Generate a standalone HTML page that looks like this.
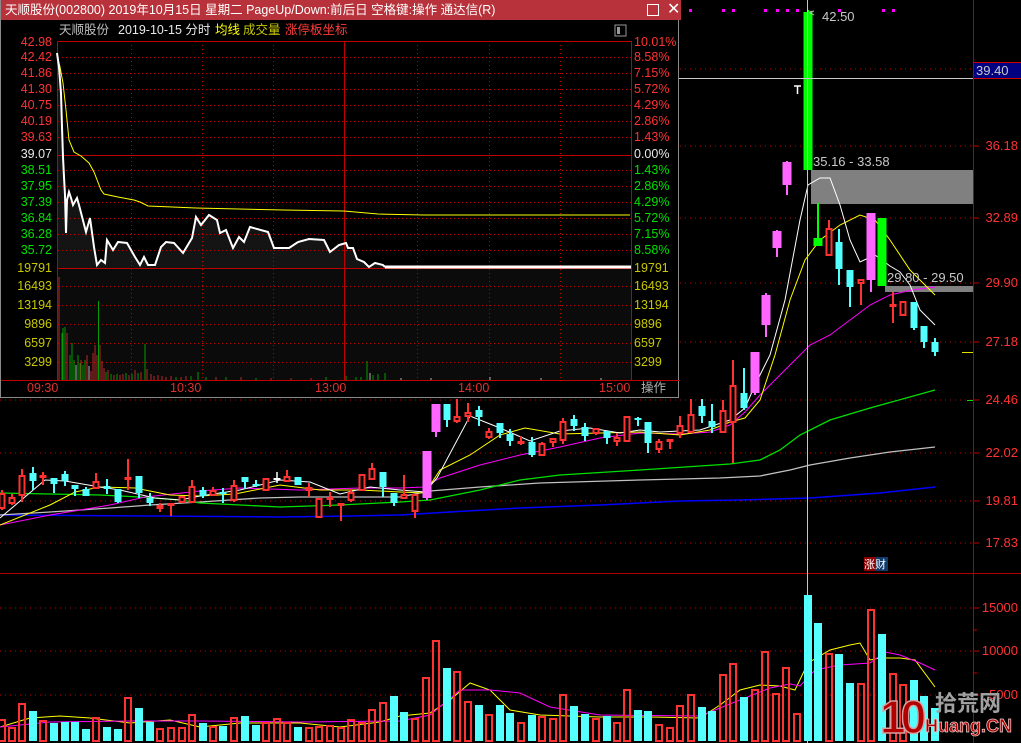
<!DOCTYPE html>
<html><head><meta charset="utf-8">
<style>
html,body{margin:0;padding:0;background:#000;width:1021px;height:743px;overflow:hidden;font-family:"Liberation Sans","Noto Sans CJK SC",sans-serif;}
#main{position:absolute;left:0;top:0}
.ax{position:absolute;color:#ff3232;font-size:13px;right:3px;line-height:14px}
#pop{position:absolute;left:0;top:0;width:679px;height:398px;background:#000;border:1px solid #8a8a8a;border-top:none;box-sizing:border-box}
#tb{position:absolute;left:0;top:0;width:680px;height:20px;background:#b7323a;color:#fff;font-size:12.5px;line-height:20px;white-space:nowrap}
.pl{position:absolute;font-size:12.5px;line-height:13px;white-space:nowrap}
</style></head><body>
<svg id="main" width="1021" height="743" xmlns="http://www.w3.org/2000/svg">
<g stroke="#c00000" stroke-dasharray="1,4" stroke-width="1">
<line x1="0" y1="69" x2="973" y2="69"/><line x1="0" y1="146" x2="973" y2="146"/><line x1="0" y1="218" x2="973" y2="218"/><line x1="0" y1="283" x2="973" y2="283"/><line x1="0" y1="342" x2="973" y2="342"/><line x1="0" y1="400" x2="973" y2="400"/><line x1="0" y1="453" x2="973" y2="453"/><line x1="0" y1="501" x2="973" y2="501"/><line x1="0" y1="543" x2="973" y2="543"/>
<line x1="0" y1="608" x2="973" y2="608"/><line x1="0" y1="651" x2="973" y2="651"/><line x1="0" y1="695" x2="973" y2="695"/>
</g>
<line x1="973.5" y1="0" x2="973.5" y2="743" stroke="#b00000"/>
<line x1="0" y1="573.5" x2="1021" y2="573.5" stroke="#b00000"/>
<g stroke="#c00000"><line x1="974" y1="146" x2="979" y2="146"/><line x1="974" y1="218" x2="979" y2="218"/><line x1="974" y1="283" x2="979" y2="283"/><line x1="974" y1="342" x2="979" y2="342"/><line x1="974" y1="400" x2="979" y2="400"/><line x1="974" y1="453" x2="979" y2="453"/><line x1="974" y1="501" x2="979" y2="501"/><line x1="974" y1="543" x2="979" y2="543"/><line x1="974" y1="608" x2="979" y2="608"/><line x1="974" y1="630" x2="977" y2="630"/><line x1="974" y1="651" x2="979" y2="651"/><line x1="974" y1="673" x2="977" y2="673"/><line x1="974" y1="695" x2="979" y2="695"/></g>
<rect x="811" y="170" width="162" height="34" fill="#808080"/>
<rect x="885" y="286" width="88" height="6" fill="#808080"/>
<g fill="none" stroke-width="1">
<polyline stroke="#0000ff" stroke-width="1.5" points="0,515 150,516 280,517 350,516 400,515 450,512 520,508 600,505 680,501 740,500 810,498 880,493 935,487"/>
<polyline stroke="#c0c0c0" stroke-width="1.3" points="0,515 50,512 110,508 150,505 200,502 260,498 300,497 340,497 400,497 430,491 480,487 540,483 640,480 720,478 760,476 790,470 810,465 850,458 890,452 935,447"/>
<polyline stroke="#00e000" stroke-width="1.3" points="0,493 100,495 140,497 180,500 200,503 280,507 340,505 400,502 430,500 480,490 520,480 560,475 640,470 700,466 730,464 760,460 780,450 800,435 830,420 870,408 935,390"/>
<polyline stroke="#ff00ff" points="0,525 50,515 110,505 145,497 200,491 240,488 300,490 360,488 400,488 425,487 440,478 480,465 520,455 560,447 600,438 640,433 680,434 710,432 730,425 745,412 760,395 775,380 790,365 810,345 830,335 850,320 870,305 890,295 912,290 935,287"/>
<polyline stroke="#ffff00" points="0,525 50,505 75,492 100,487 135,488 170,495 200,496 235,494 280,485 320,490 360,490 400,492 425,493 440,470 470,455 500,435 525,428 560,434 600,433 640,432 680,435 710,430 730,422 745,418 760,400 775,355 790,300 805,260 820,240 840,225 860,215 875,220 890,240 910,270 935,295"/>
<polyline stroke="#ffffff" points="0,518 45,480 65,481 100,487 120,490 155,498 180,500 200,496 240,490 280,480 310,482 340,494 370,487 400,490 425,492 437,478 470,416 500,428 530,441 560,431 590,428 620,433 640,430 660,432 700,430 730,420 745,408 755,385 770,355 785,300 800,220 808,185 820,178 830,178 840,205 850,240 860,262 875,255 890,266 900,272 910,285 920,310 935,325"/>
<polyline stroke="#ffff00" points="0,727 30,718 60,716 90,718 130,723 170,720 200,727 240,723 300,723 340,727 380,722 400,716 430,713 450,700 470,683 490,690 510,710 540,715 600,717 650,717 700,718 720,705 740,690 760,685 780,686 795,690 808,663 830,650 850,645 860,643 870,660 880,658 900,658 915,660 935,687"/>
<polyline stroke="#ff00ff" points="0,727 50,722 130,721 200,721 300,722 400,721 430,715 460,690 490,690 520,693 550,707 600,715 700,716 740,700 770,688 790,684 800,686 815,670 840,665 870,663 885,652 900,655 920,663 935,670"/>
</g>
<g id="cg"></g>
<g fill="#ff00ff"><rect x="689" y="9" width="3" height="3"/><rect x="722" y="9" width="3" height="3"/><rect x="732" y="9" width="3" height="3"/><rect x="764" y="9" width="3" height="3"/><rect x="776" y="9" width="3" height="3"/><rect x="786" y="9" width="3" height="3"/><rect x="796" y="9" width="3" height="3"/><rect x="838" y="9" width="3" height="3"/><rect x="882" y="9" width="3" height="3"/><rect x="892" y="9" width="3" height="3"/></g>
<line x1="807.5" y1="0" x2="807.5" y2="743" stroke="#c8c8c8"/>
<line x1="0" y1="78.5" x2="973" y2="78.5" stroke="#c8c8c8"/>
<path d="M794 86h7M797.5 86v8" stroke="#fff" stroke-width="1.5"/>
<line x1="962" y1="352.5" x2="973" y2="352.5" stroke="#e0e000"/>
<line x1="967" y1="400.5" x2="973" y2="400.5" stroke="#00e000"/>
<rect x="974" y="62" width="47" height="16" fill="#000080"/>
<line x1="974" y1="62.5" x2="1021" y2="62.5" stroke="#d00000"/>
<line x1="974" y1="78.5" x2="1021" y2="78.5" stroke="#d00000"/>
<text x="976" y="75" fill="#c8c8c8" font-size="13" font-family="Liberation Sans">39.40</text>
<path d="M809 12l5 3M809 12l5-1" stroke="#c0c0c0"/>
<g font-family="Liberation Sans" font-size="13" fill="#c8c8c8">
<text x="822" y="21">42.50</text>
<text x="813" y="166">35.16 - 33.58</text>
<text x="887" y="282">29.80 - 29.50</text>
</g>
<rect x="864" y="557" width="12" height="14" fill="#8b0000"/><rect x="876" y="557" width="12" height="14" fill="#103a6a"/>
<text x="864" y="568" fill="#fff" font-size="11" font-family="Noto Sans CJK SC">涨财</text>
</svg>
<div class="ax" style="top:139px">36.18</div>
<div class="ax" style="top:211px">32.89</div>
<div class="ax" style="top:276px">29.90</div>
<div class="ax" style="top:335px">27.18</div>
<div class="ax" style="top:393px">24.46</div>
<div class="ax" style="top:446px">22.02</div>
<div class="ax" style="top:494px">19.81</div>
<div class="ax" style="top:536px">17.83</div>
<div class="ax" style="top:601px">15000</div>
<div class="ax" style="top:644px">10000</div>
<div class="ax" style="top:688px">5000</div>
<div style="position:absolute;left:880px;top:694px;font:bold 46px/46px 'Liberation Sans',sans-serif;color:#b00000;-webkit-text-stroke:1.5px #d8a0a0;letter-spacing:-5px">10</div>
<div style="position:absolute;left:935px;top:689px;font:bold 22px/26px 'Noto Sans CJK SC',sans-serif;color:#a0a0a0">拾荒网</div>
<div style="position:absolute;left:925px;top:715px;font:bold 18px/22px 'Liberation Sans',sans-serif;color:#b00000;-webkit-text-stroke:0.7px #f0d0d0">Huang.CN</div>

<div id="pop">
<div id="tb"><span style="position:absolute;left:4px">天顺股份(002800) 2019年10月15日 星期二 PageUp/Down:前后日 空格键:操作 通达信(R)</span>
<span style="position:absolute;left:646px;top:4px;width:10px;height:10px;border:1px solid #fff"></span>
<span style="position:absolute;left:666px;top:0;font-size:16px">✕</span></div>
<svg width="680" height="398" style="position:absolute;left:0;top:0" xmlns="http://www.w3.org/2000/svg">
<rect x="57" y="268" width="573" height="112" fill="#0b0b0b"/>
<path id="fill" fill="#141414" d=""/>
<g stroke="#c00000" stroke-dasharray="1,3">
<line x1="57" y1="57.5" x2="630" y2="57.5"/><line x1="57" y1="73.5" x2="630" y2="73.5"/><line x1="57" y1="89.5" x2="630" y2="89.5"/><line x1="57" y1="105.5" x2="630" y2="105.5"/><line x1="57" y1="121.5" x2="630" y2="121.5"/><line x1="57" y1="137.5" x2="630" y2="137.5"/>
<line x1="57" y1="170.5" x2="630" y2="170.5"/><line x1="57" y1="186.5" x2="630" y2="186.5"/><line x1="57" y1="202.5" x2="630" y2="202.5"/><line x1="57" y1="218.5" x2="630" y2="218.5"/><line x1="57" y1="234.5" x2="630" y2="234.5"/><line x1="57" y1="250.5" x2="630" y2="250.5"/>
<line x1="57" y1="286.5" x2="630" y2="286.5"/><line x1="57" y1="305.5" x2="630" y2="305.5"/><line x1="57" y1="324.5" x2="630" y2="324.5"/><line x1="57" y1="343.5" x2="630" y2="343.5"/><line x1="57" y1="362.5" x2="630" y2="362.5"/>
<line x1="130.5" y1="41" x2="130.5" y2="380"/><line x1="201.5" y1="41" x2="201.5" y2="380"/><line x1="272.5" y1="41" x2="272.5" y2="380"/><line x1="416.5" y1="41" x2="416.5" y2="380"/><line x1="488.5" y1="41" x2="488.5" y2="380"/><line x1="559.5" y1="41" x2="559.5" y2="380"/>
</g>
<g stroke="#c00000" fill="none">
<line x1="56" y1="41.5" x2="631" y2="41.5"/><line x1="56.5" y1="41" x2="56.5" y2="380"/><line x1="630.5" y1="41" x2="630.5" y2="380"/><line x1="343.5" y1="41" x2="343.5" y2="380"/>
<line x1="57" y1="155.5" x2="630" y2="155.5"/><line x1="57" y1="268.5" x2="630" y2="268.5"/><line x1="0" y1="380.5" x2="679" y2="380.5"/>
</g>
<g id="pv"></g>
<polyline fill="none" stroke="#ffff00" points="56,55 59,67 62,83 65,110 68,140 73,152 80,156 88,163 93,172 100,190 103,194 117,197 133,200 139,202 147,206 195,208 282,210 343,211 377,214 423,215 629,215"/>
<polyline id="wl" fill="none" stroke="#ffffff" stroke-width="2" points="56,53 58,67 60,93 61,127 62,157 63,177 64,195 65,233 66,200 68,192 70,198 72,205 76,198 78,205 85,232 89,218 93,247 96,265 100,260 104,263 106,240 112,250 117,242 126,243 134,257 139,265 143,257 147,265 154,265 160,247 165,242 173,243 182,253 191,238 195,217 200,225 208,215 216,220 219,233 225,230 232,248 238,237 243,242 249,227 267,232 273,248 288,248 297,242 308,239 323,240 329,252 338,245 345,243 347,248 352,248 356,259 363,262 368,267 374,263 382,265 384,267"/>
<line x1="384" y1="267" x2="630" y2="267" stroke="#fff" stroke-width="3"/>
<rect x="614" y="25" width="11" height="11" fill="none" stroke="#999"/><rect x="616" y="27" width="3" height="7" fill="#999"/>
</svg>
<div class="pl" style="left:58px;top:24px;color:#c0c0c0">天顺股份</div>
<div class="pl" style="left:117px;top:24px;color:#e8e8e8">2019-10-15 分时</div>
<div class="pl" style="left:214px;top:24px;color:#ffff00">均线</div>
<div class="pl" style="left:242px;top:24px;color:#c8c800">成交量</div>
<div class="pl" style="left:284px;top:24px;color:#ff3c3c">涨停板坐标</div>
<div id="pla"></div>
</div>
<script>
var NS='http://www.w3.org/2000/svg';
function el(p,t,a){var e=document.createElementNS(NS,t);for(var k in a)e.setAttribute(k,a[k]);p.appendChild(e);return e;}
var C=[[2,493,508,490,510,'r'],[12,497,503,494,505,'r'],[22,475,495,469,502,'r'],[33,473,481,467,490,'c'],[43,475,477,472,485,'r'],[54,478,484,478,493,'c'],[65,474,481,471,486,'c'],[75,485,489,485,496,'c'],[86,489,496,487,496,'c'],[96,481,488,473,488,'r'],[107,486,489,479,494,'c'],[118,489,502,489,503,'c'],[128,477,478,459,490,'r'],[139,476,493,476,498,'c'],[150,498,503,493,506,'c'],[160,505,508,503,512,'r'],[171,503,505,503,516,'r'],[182,496,502,496,502,'r'],[192,486,502,480,502,'r'],[203,490,496,487,498,'c'],[213,490,495,487,495,'r'],[223,492,493,488,503,'c'],[234,485,500,480,502,'r'],[245,477,482,477,489,'c'],[256,484,485,480,487,'c'],[266,478,490,478,490,'r'],[277,478,480,472,483,'w'],[287,476,481,470,481,'r'],[298,477,485,477,485,'c'],[309,487,490,483,497,'r'],[319,498,517,498,517,'r'],[330,497,498,492,507,'r'],[341,503,504,503,521,'r'],[351,492,500,489,502,'r'],[362,474,490,474,490,'r'],[372,468,479,463,479,'r'],[383,472,487,472,497,'c'],[394,493,503,493,506,'c'],[404,494,498,475,499,'r'],[415,494,511,494,518,'r'],[427,451,498,451,500,'p'],[436,404,432,404,437,'p'],[447,404,420,404,427,'c'],[457,416,421,399,423,'r'],[468,412,416,403,422,'r'],[479,410,417,406,426,'c'],[489,431,437,428,439,'r'],[500,423,433,423,438,'c'],[510,434,441,429,446,'c'],[521,441,442,436,445,'r'],[532,442,455,437,457,'c'],[542,443,455,442,455,'r'],[553,438,442,438,447,'r'],[563,421,440,418,444,'r'],[574,419,426,415,431,'c'],[585,427,436,423,441,'c'],[596,428,433,428,435,'r'],[607,431,438,431,444,'c'],[617,437,441,433,446,'r'],[627,416,441,416,441,'r'],[638,418,419,417,426,'c'],[648,422,443,422,453,'c'],[659,441,449,439,453,'r'],[670,439,440,439,449,'r'],[680,425,433,416,438,'r'],[691,414,432,399,433,'r'],[702,406,416,399,423,'c'],[712,421,427,404,433,'c'],[723,410,432,400,432,'r'],[733,385,422,360,463,'r'],[744,393,408,368,410,'c'],[755,352,393,352,395,'p'],[766,295,325,293,337,'p'],[777,231,248,230,257,'p'],[787,162,185,161,195,'p'],[808,12,170,10,170,'g'],[818,238,246,203,246,'g'],[829,228,255,220,255,'r'],[839,242,269,229,285,'c'],[850,270,287,270,307,'c'],[861,279,283,279,305,'r'],[871,213,280,213,292,'p'],[882,218,286,218,286,'g'],[893,304,306,292,323,'r'],[903,301,315,301,315,'r'],[914,302,328,302,330,'c'],[924,326,342,326,348,'c'],[935,342,352,338,356,'c']];
var V=[[2,719,'r'],[12,727,'r'],[22,703,'r'],[33,711,'c'],[43,720,'r'],[54,723,'c'],[65,722,'c'],[75,722,'c'],[86,729,'c'],[96,717,'r'],[107,727,'c'],[118,729,'c'],[128,697,'r'],[139,708,'c'],[150,722,'c'],[160,728,'r'],[171,727,'r'],[182,727,'r'],[192,714,'r'],[203,723,'c'],[213,726,'r'],[223,726,'c'],[234,717,'r'],[245,716,'c'],[256,725,'c'],[266,722,'r'],[277,718,'r'],[287,722,'r'],[298,727,'c'],[309,727,'r'],[319,726,'r'],[330,725,'r'],[341,727,'r'],[351,719,'r'],[362,722,'r'],[372,709,'r'],[383,702,'r'],[394,696,'c'],[404,712,'c'],[415,718,'r'],[426,677,'r'],[436,640,'r'],[447,668,'c'],[457,671,'r'],[468,701,'r'],[479,705,'c'],[489,714,'r'],[500,705,'c'],[510,713,'c'],[521,722,'r'],[532,715,'c'],[542,716,'r'],[553,718,'r'],[563,694,'r'],[574,706,'c'],[585,714,'c'],[596,718,'r'],[607,716,'c'],[617,722,'r'],[627,689,'r'],[638,710,'c'],[648,711,'c'],[659,724,'r'],[670,727,'r'],[680,705,'r'],[691,694,'r'],[702,707,'c'],[712,711,'c'],[723,674,'r'],[733,663,'r'],[744,697,'c'],[755,689,'r'],[765,651,'r'],[776,693,'r'],[786,667,'r'],[797,713,'r'],[808,595,'c'],[818,623,'c'],[829,653,'r'],[839,654,'c'],[850,683,'c'],[861,683,'r'],[871,609,'r'],[882,634,'c'],[893,673,'r'],[903,684,'r'],[914,680,'c'],[924,696,'c'],[935,708,'c']];
var g=document.getElementById('cg');
var col={r:'#ff3232',c:'#54ffff',p:'#ff66ff',g:'#00ff00',w:'#ffffff'};
V.forEach(function(v){var x=v[0];if(v[2]=='r')el(g,'rect',{x:x-3,y:v[1]+1,width:6,height:740-v[1],fill:'none',stroke:'#ff3232','stroke-width':2});else el(g,'rect',{x:x-4,y:v[1],width:8,height:741-v[1],fill:'#54ffff'});});
C.forEach(function(c){var x=c[0],t=c[5],w=(t=='p'||t=='g')?9:7;var cl=col[t];
el(g,'line',{x1:x,y1:c[3],x2:x,y2:c[4],stroke:cl,'stroke-width':(t=='w'?1.5:2)});
if(t=='r')el(g,'rect',{x:x-w/2+1,y:c[1]+1,width:w-2,height:Math.max(c[2]-c[1]-1,1),fill:'#000',stroke:cl,'stroke-width':2});
else el(g,'rect',{x:x-w/2,y:c[1],width:w,height:Math.max(c[2]-c[1],2),fill:cl});});
var pv=document.getElementById('pv');
var PV=[[58,277,'r'],[61,333,'g'],[62,328,'g'],[64,327,'g'],[66,333,'r'],[69,355,'g'],[71,343,'g'],[73,360,'g'],[75,365,'w'],[77,355,'g'],[79,363,'g'],[80,360,'r'],[82,365,'g'],[84,360,'g'],[86,355,'r'],[88,366,'w'],[90,371,'r'],[92,353,'r'],[94,345,'r'],[96,355,'r'],[97.5,301,'g'],[99,345,'r'],[101,361,'r'],[103,368,'r'],[105,372,'g'],[107,370,'r'],[110,374,'g'],[113,375,'r'],[116,374,'g'],[119,375,'r'],[122,374,'r'],[125,373,'g'],[128,375,'r'],[131,374,'g'],[134,370,'r'],[137,373,'g'],[140,372,'r'],[144,344,'g'],[146,369,'r'],[150,374,'r'],[153,376,'r'],[157,375,'r'],[161,376,'r'],[165,377,'r'],[170,376,'r'],[175,377,'g'],[180,377,'r'],[185,376,'r'],[190,376,'g'],[197,372,'g'],[205,377,'g'],[215,377,'r'],[225,377,'g'],[240,377,'r'],[255,378,'g'],[270,378,'r'],[290,378,'r'],[310,378,'r'],[325,377,'g'],[345,376,'g'],[355,377,'g'],[360,377,'g'],[366,361,'g'],[369,373,'w'],[372,375,'g'],[377,374,'g'],[384,373,'g'],[400,378,'w'],[430,378,'w'],[489,377,'w'],[540,378,'w'],[600,378,'w']];
PV.forEach(function(v){el(pv,'line',{x1:v[0],y1:v[1],x2:v[0],y2:380,stroke:v[2]=='r'?'#e03030':v[2]=='g'?'#00c000':'#ddd','stroke-width':0.8});});
var pts=document.getElementById('wl').getAttribute('points');
document.getElementById('fill').setAttribute('d','M'+pts.split(' ').join(' L')+' L630,267 L630,268 L56,268 Z');
var L=[['42.98',42,'#ff3232'],['42.42',57,'#ff3232'],['41.86',73,'#ff3232'],['41.30',89,'#ff3232'],['40.75',105,'#ff3232'],['40.19',121,'#ff3232'],['39.63',137,'#ff3232'],['39.07',154,'#e8e8e8'],['38.51',170,'#00e000'],['37.95',186,'#00e000'],['37.39',202,'#00e000'],['36.84',218,'#00e000'],['36.28',234,'#00e000'],['35.72',250,'#00e000'],['19791',268,'#c8c800'],['16493',286,'#c8c800'],['13194',305,'#c8c800'],['9896',324,'#c8c800'],['6597',343,'#c8c800'],['3299',362,'#c8c800']];
var R=['10.01%','8.58%','7.15%','5.72%','4.29%','2.86%','1.43%','0.00%','1.43%','2.86%','4.29%','5.72%','7.15%','8.58%'];
var pla=document.getElementById('pla'),h='';
L.forEach(function(l,i){h+='<div class="pl" style="right:626px;top:'+(l[1]-6)+'px;color:'+l[2]+'">'+l[0]+'</div>';
var rt=i<14?R[i]:l[0];var rc=i<7?'#ff3232':i==7?'#e8e8e8':i<14?'#00e000':'#c8c800';
h+='<div class="pl" style="left:633px;top:'+(l[1]-6)+'px;color:'+rc+'">'+rt+'</div>';});
[['09:30',26],['10:30',169],['13:00',314],['14:00',457],['15:00',598]].forEach(function(t){h+='<div class="pl" style="left:'+t[1]+'px;top:382px;color:#e03030">'+t[0]+'</div>';});
h+='<div class="pl" style="left:640px;top:382px;color:#b0b0b0">操作</div>';
pla.innerHTML=h;
</script>
</body></html>
